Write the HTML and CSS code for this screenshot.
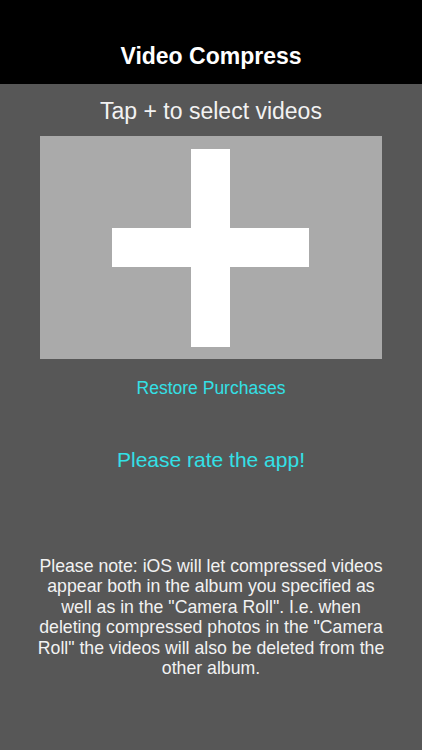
FILE: index.html
```html
<!DOCTYPE html>
<html lang="en">
<head>
    <meta charset="UTF-8">
    <meta name="viewport" content="width=device-width, initial-scale=1.0">
    <title>Video Compress</title>
    <link rel="stylesheet" href="styles.css">
</head>
<body>
    <div class="header">
        <h1>Video Compress</h1>
    </div>

    <div class="main">
        <p class="hint">Tap + to select videos</p>

        <div class="picker">
            <div class="plus-v"></div>
            <div class="plus-h"></div>
        </div>

        <a class="restore" href="#">Restore Purchases</a>

        <a class="rate" href="#">Please rate the app!</a>

        <p class="note">Please note: iOS will let compressed videos appear both in the album you specified as well as in the "Camera Roll". I.e. when deleting compressed photos in the "Camera Roll" the videos will also be deleted from the other album.</p>
    </div>
</body>
</html>
```

FILE: styles.css
```css
* {
    box-sizing: border-box;
    margin: 0;
    padding: 0;
    font-family: "Liberation Sans", Arial, sans-serif;
}

body {
    background-color: #575757;
    width: 422px;
    height: 750px;
    overflow: hidden;
}

.header {
    background-color: #000;
    height: 84px;
    padding-top: 43px;
    text-align: center;
}

.header h1 {
    color: #fff;
    font-size: 23px;
    font-weight: bold;
    line-height: 26px;
}

.main {
    display: flex;
    flex-direction: column;
    align-items: center;
}

.hint {
    color: #f2f2f2;
    font-size: 23px;
    line-height: 26px;
    margin-top: 14px;
}

.picker {
    position: relative;
    width: 342px;
    height: 223px;
    margin-top: 12px;
    background-color: #aaaaaa;
}

.plus-v {
    position: absolute;
    left: 151px;
    top: 13px;
    width: 39px;
    height: 198px;
    background-color: #fff;
}

.plus-h {
    position: absolute;
    left: 72px;
    top: 92px;
    width: 197px;
    height: 39px;
    background-color: #fff;
}

.restore {
    color: #33e0e6;
    font-size: 17.5px;
    line-height: 20px;
    margin-top: 19px;
    text-decoration: none;
}

.rate {
    color: #33e0e6;
    font-size: 21px;
    line-height: 24px;
    margin-top: 50px;
    text-decoration: none;
}

.note {
    color: #f2f2f2;
    font-size: 17.7px;
    line-height: 20.4px;
    text-align: center;
    width: 352px;
    margin-top: 84px;
}
```
